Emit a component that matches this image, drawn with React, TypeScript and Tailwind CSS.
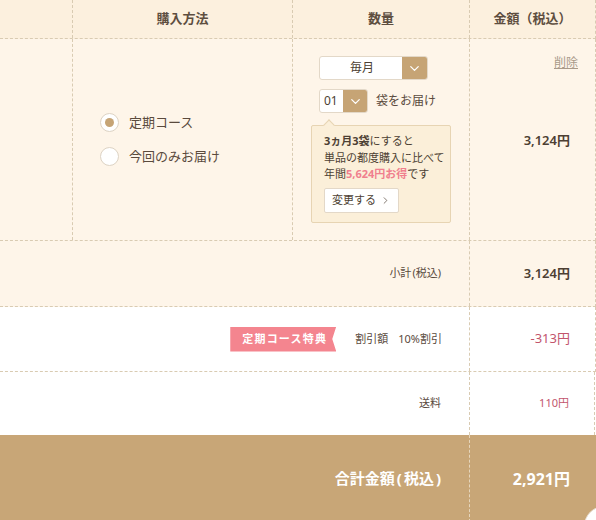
import { ChevronDown, ChevronRight } from "lucide-react";

const font = { fontFamily: '"Noto Sans", "Noto Sans CJK JP", sans-serif' };

function Radio({ checked, label }: { checked: boolean; label: string }) {
  return (
    <label className="flex items-center gap-[10px] text-[13px] text-[#5a4a3d]">
      <span className="flex h-[19px] w-[19px] items-center justify-center rounded-full border border-[#ddd3c4] bg-white">
        {checked && <span className="h-[9px] w-[9px] rounded-full bg-[#c6a475]" />}
      </span>
      {label}
    </label>
  );
}

export default function App() {
  const dash = "border-dashed border-[#d9cbb2]";
  return (
    <div style={font} className="relative h-[520px] w-[596px] overflow-hidden bg-white text-[#4d3f33]">
      {/* header */}
      <div className={`grid h-[39px] grid-cols-[73px_220px_177px_125px] border-b border-r bg-[#fcf0de] ${dash}`}>
        <div className={`border-r ${dash}`} />
        <div className={`flex items-center justify-center border-r text-[13px] font-bold text-[#5e4e40] ${dash}`}>購入方法</div>
        <div className={`flex items-center justify-center border-r text-[13px] font-bold text-[#5e4e40] ${dash}`}>数量</div>
        <div className="flex items-center justify-center text-[13px] font-bold text-[#5e4e40]">金額（税込）</div>
      </div>

      {/* item row */}
      <div className={`grid h-[202px] grid-cols-[73px_220px_177px_125px] border-b border-r bg-[#fef5e9] ${dash}`}>
        <div className={`border-r ${dash}`} />
        <div className={`flex flex-col justify-center gap-[15px] border-r pl-[27px] ${dash}`}>
          <Radio checked label="定期コース" />
          <Radio checked={false} label="今回のみお届け" />
        </div>
        <div className={`flex flex-col justify-center border-r pl-[18px] ${dash}`}>
          <div className="ml-[8px] flex h-[24px] w-[109px] overflow-hidden rounded-[3px] border border-[#e3d8c8] bg-white">
            <span className="flex flex-1 items-center justify-center pl-[2px] text-[12px] text-[#4d3f33]">毎月</span>
            <span className="flex w-[25px] items-center justify-center bg-[#c6a475] text-white">
              <ChevronDown size={15} strokeWidth={2} />
            </span>
          </div>
          <div className="ml-[8px] mt-[9px] flex items-center gap-[8px]">
            <div className="flex h-[24px] w-[49px] overflow-hidden rounded-[3px] border border-[#e3d8c8] bg-white">
              <span className="flex flex-1 items-center pl-[4px] text-[12px] text-[#4d3f33]">01</span>
              <span className="flex w-[24px] items-center justify-center bg-[#c6a475] text-white">
                <ChevronDown size={15} strokeWidth={2} />
              </span>
            </div>
            <span className="text-[12px] text-[#5a4a3d]">袋をお届け</span>
          </div>
          <div className="relative mt-[12px] w-[140px] whitespace-nowrap rounded-[2px] border border-[#e7d4b3] bg-[#fbefd9] pb-[9px] pl-[12px] pr-[4px] pt-[7px] text-[11px] leading-[16.5px] text-[#4d3f33]">
            <span className="absolute -top-[5px] left-[13px] h-[8px] w-[8px] rotate-45 border-l border-t border-[#e7d4b3] bg-[#fbefd9]" />
            <p>
              <b>3ヵ月3袋</b>にすると
            </p>
            <p>単品の都度購入に比べて</p>
            <p>
              年間<b className="text-[#f07f8e]">5,624円お得</b>です
            </p>
            <button className="mt-[5px] flex h-[25px] items-center gap-[4px] rounded-[2px] border border-[#e3d8c8] bg-white px-[7px] text-[11px] text-[#4d3f33]">
              変更する
              <ChevronRight size={11} strokeWidth={1.5} />
            </button>
          </div>
        </div>
        <div className="flex flex-col pb-[30px] pr-[17px] pt-[15px]">
          <span className="self-end text-[12px] text-[#a99a89] underline">削除</span>
          <div className="flex flex-1 items-center justify-end pr-[8px] text-[13px] font-semibold text-[#4d3f33]">3,124円</div>
        </div>
      </div>

      {/* subtotal */}
      <div className={`grid h-[66px] grid-cols-[470px_125px] border-b border-r bg-[#fef5e9] ${dash}`}>
        <div className={`flex items-center justify-end border-r pr-[28px] text-[11px] text-[#5a4a3d] ${dash}`}>
          小計<span className="ml-[1px]">(</span>税込<span>)</span>
        </div>
        <div className="flex items-center justify-end pr-[25px] text-[13px] font-semibold">3,124円</div>
      </div>

      {/* discount */}
      <div className={`grid h-[65px] grid-cols-[470px_125px] border-b border-r bg-white ${dash}`}>
        <div className={`flex items-center justify-end gap-[19px] border-r pr-[27px] ${dash}`}>
          <span className="flex h-[25px] w-[106px] items-center pl-[12px] text-[11px] font-bold tracking-[1.2px] text-white bg-[#f4858f] [clip-path:polygon(0_0,100%_0,calc(100%-4px)_50%,100%_100%,0_100%)]">
            定期コース特典
          </span>
          <span className="text-[11px] text-[#5a4a3d]">
            割引額<span className="ml-[10px]">10%割引</span>
          </span>
        </div>
        <div className="flex items-center justify-end pr-[25px] text-[13px] text-[#c2556c]">-313円</div>
      </div>

      {/* shipping */}
      <div className="grid h-[63px] grid-cols-[470px_125px] bg-white">
        <div className={`flex items-center justify-end border-r pr-[28px] text-[11px] text-[#5a4a3d] ${dash}`}>送料</div>
        <div className={`flex items-center justify-end border-r pr-[25px] text-[11px] text-[#c2556c] ${dash}`}>110円</div>
      </div>

      {/* total */}
      <div className="grid h-[87px] grid-cols-[470px_126px] bg-[#c8a677]">
        <div className="flex items-center justify-end border-r border-dashed border-[#e6d6bd] pr-[28px] text-[15px] font-bold text-white">
          合計金額<span className="mx-[2px]">(</span>税込<span className="ml-[2px]">)</span>
        </div>
        <div className="flex items-center justify-end pr-[26px] text-[16px] font-bold text-white">2,921円</div>
      </div>

      <span className="absolute left-[584px] top-[506px] h-[40px] w-[40px] rounded-full border border-[#e8ddd0] bg-white" />
    </div>
  );
}
